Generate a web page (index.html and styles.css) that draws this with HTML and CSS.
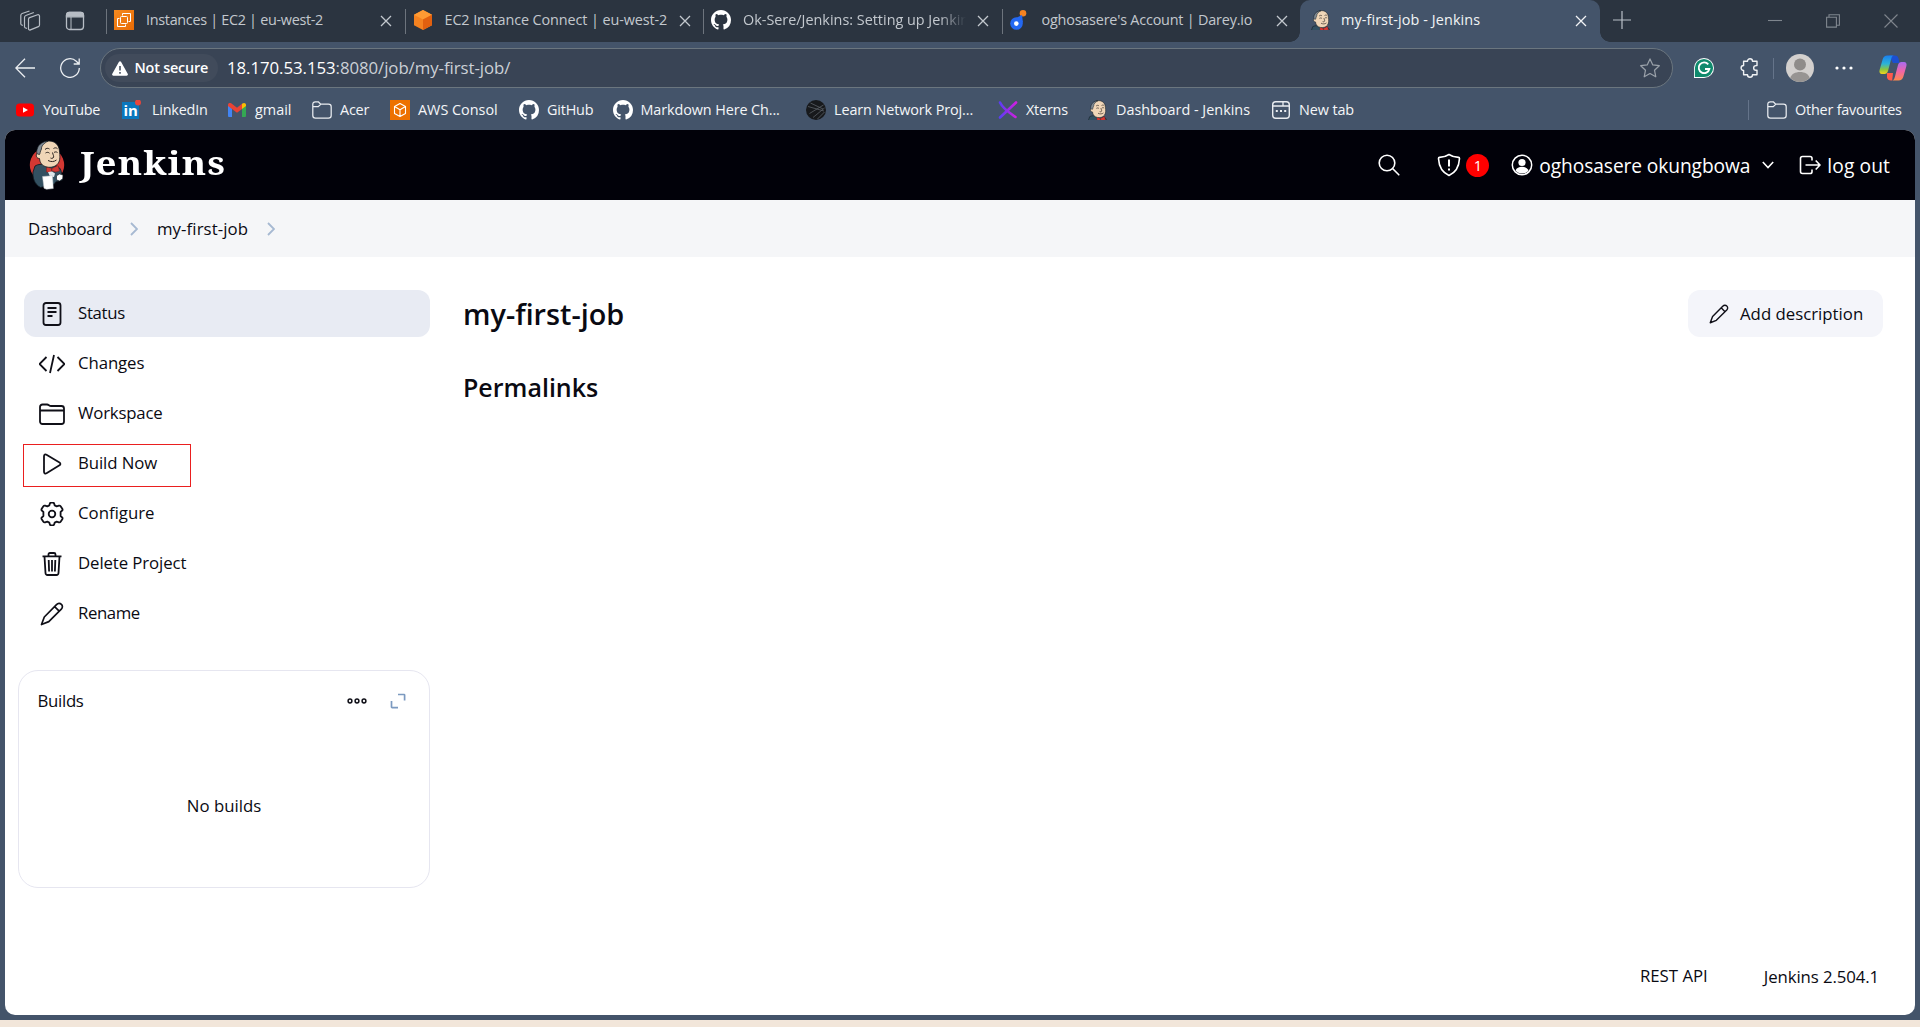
FILE: index.html
```html
<!DOCTYPE html>
<html lang="en">
<head>
<meta charset="utf-8">
<title>my-first-job - Jenkins</title>
<link rel="stylesheet" href="styles.css">
</head>
<body>
<svg class="defs" width="0" height="0" aria-hidden="true">
  <defs>
    <linearGradient id="ec2" x1="0" y1="0" x2="1" y2="1"><stop offset="0" stop-color="#f58a1f"/><stop offset="1" stop-color="#e86a05"/></linearGradient>
    <linearGradient id="xt" x1="0" y1="0" x2="1" y2="0"><stop offset="0" stop-color="#5b3df5"/><stop offset="1" stop-color="#d11ee0"/></linearGradient>
    <linearGradient id="cpA" x1="0" y1="0" x2="0" y2="1"><stop offset="0" stop-color="#1a7ff0"/><stop offset=".45" stop-color="#2cb3d8"/><stop offset=".75" stop-color="#8cc63f"/><stop offset="1" stop-color="#f4d51c"/></linearGradient>
    <linearGradient id="cpB" x1="0" y1="0" x2="0" y2="1"><stop offset="0" stop-color="#a86bf0"/><stop offset=".5" stop-color="#f065a8"/><stop offset="1" stop-color="#ff8a4c"/></linearGradient>
    <symbol id="github" viewBox="0 0 16 16"><path fill="#fff" d="M8 0C3.58 0 0 3.58 0 8c0 3.54 2.29 6.53 5.47 7.59.4.07.55-.17.55-.38 0-.19-.01-.82-.01-1.49-2.01.37-2.53-.49-2.69-.94-.09-.23-.48-.94-.82-1.13-.28-.15-.68-.52-.01-.53.63-.01 1.08.58 1.23.82.72 1.21 1.87.87 2.33.66.07-.52.28-.87.51-1.07-1.78-.2-3.64-.89-3.64-3.95 0-.87.31-1.59.82-2.15-.08-.2-.36-1.02.08-2.12 0 0 .67-.21 2.2.82.64-.18 1.32-.27 2-.27.68 0 1.36.09 2 .27 1.53-1.04 2.2-.82 2.2-.82.44 1.1.16 1.92.08 2.12.51.56.82 1.27.82 2.15 0 3.07-1.87 3.75-3.65 3.95.29.25.54.73.54 1.48 0 1.07-.01 1.93-.01 2.2 0 .21.15.46.55.38A8.013 8.013 0 0 0 16 8c0-4.42-3.58-8-8-8z"/></symbol>
    <symbol id="butler" viewBox="0 0 38 50">
      <path fill="#335061" stroke="#10181e" stroke-width=".8" d="M7 26c3-2 7-2 10-1l10 1c4 0 6 3 6.500 7l1 7-7 2-1 2-14 3.500C6 44 4.500 37 5 32z"/>
      <path fill="#d33833" stroke="#7c1512" stroke-width=".4" d="M18.500 26.500l5 2 0 4-5-.5zM24 28.500l6-3 1.500 5.500-4 1-3.500-1z"/>
      <path fill="#dfe6ea" d="M20 32l4-.5 3 2-1 3.500-4-.5z"/>
      <path fill="#f0d6b7" stroke="#10181e" stroke-width=".8" d="M11 10C12 4 16 1 21 1c6 0 10 4 10.500 10 .4 5 1 9-1.500 12.500-2 3-7 4.500-11 3.500-5-1-7-4-7.500-8.500-3 0-4-3-2.500-5 .6-1 1.400-1 2-.5z"/>
      <path fill="#818b95" stroke="#10181e" stroke-width=".7" d="M20 1c-5 .5-9 3-10.500 7C8 12 9 14 9.500 14l2 .5c.5 0 .5-3 2-5.500-.5-3 3-6 6.500-8z"/>
      <path fill="none" stroke="#2a2320" stroke-width="1" d="M17 9.500c1.500-1.500 3-1.500 4.500-.5M25.500 8.500c1.500-1 3-.8 4 .2M17.500 13c1.500-1 3-.8 4 .2M26 12.500c1-.8 2.500-.8 3.500 0M24.500 12.500c.5 2.500 2 4 .5 5.500-1 .6-2 .4-2.500 0M20 20.500c3 1.500 6 1.500 8.500-.5"/>
      <path fill="#fff" stroke="#bcc3c8" stroke-width=".5" d="M14.500 36.500l10-.8.800 12.800-6.800.8-2.500-1z"/>
      <path fill="#fff" stroke="#10181e" stroke-width=".6" d="M28.500 35.800l3-1.800 3.500 1-.3 3.800-3.200 2.200-3-1.200z"/>
    </symbol>
    <symbol id="folder" viewBox="0 0 20 20"><path fill="none" stroke="#e9ecf0" stroke-width="1.250" stroke-linejoin="round" d="M.8 6.500V4.300C.8 2.800 1.800 1.800 3.300 1.800h3l2.400 2.400h7.800c1.500 0 2.700 1 2.700 2.600v8.700c0 1.500-1.200 2.700-2.700 2.700H3.500C2 18.200.8 17 .8 15.500zM.8 6.600h5.500l2.400-2.400"/></symbol>
    <symbol id="x" viewBox="0 0 12 12"><path fill="none" stroke="currentColor" stroke-width="1.300" d="M1 1l10 10M11 1L1 11"/></symbol>
    <symbol id="pencil" viewBox="0 0 24 24"><path fill="none" stroke="#101018" stroke-width="1.700" stroke-linejoin="round" d="M1.500 22.500L4.300 15 16.500 2.600C18 1.100 20 1 21.400 2.400c1.400 1.300 1.300 3.300-.1 4.800L8.800 19.600zM14.600 4.600l4.600 4.600"/></symbol>
  </defs>
</svg>
<div class="browser">
  <div class="tabstrip">
    <div class="strip-tools">
      <svg width="22" height="22" viewBox="0 0 22 22" fill="none" stroke="#b7bdc5" stroke-width="1.200" stroke-linejoin="round"><path d="M9.500 9.200c0-.8.4-1.300 1.100-1.600l8-2.800c1-.3 1.900.2 1.900 1.200v9c0 .8-.4 1.300-1.100 1.600l-8 3.300c-1 .4-1.900-.2-1.900-1.200zM5.500 17.500V7.500c0-1 .4-1.700 1.300-2l8-3M1.800 14.500V5.500c0-1 .4-1.700 1.300-2L10.500 1"/><path d="M5.500 17.500l2.500 1M1.800 14.500l2 1"/></svg>
      <svg width="20" height="20" viewBox="0 0 20 20" fill="none" stroke="#b7bdc5" stroke-width="1.300"><rect x="1.500" y="1.500" width="17" height="17" rx="3"/><path fill="#b7bdc5" d="M1.500 5.800V4.200c0-1.500 1.200-2.700 2.700-2.700h11.600c1.500 0 2.700 1.200 2.700 2.700v1.600z"/><path d="M6 6v12.500" stroke-width="1"/></svg>
    </div>
    <div class="tab">
      <svg class="fav" viewBox="0 0 20 20"><path fill="url(#ec2)" d="M0 0h20v20H0z"/><path fill="none" stroke="#fff" stroke-width="1" d="M8.500 5.500V3.500h8v8h-2M5.500 8.500H3.500v8h8v-2"/><rect x="6.500" y="6.500" width="7" height="7" rx="1" fill="none" stroke="#fff"/></svg>
      <span class="tab-title k3">Instances | EC2 | eu-west-2</span><svg class="close"><use href="#x"/></svg>
    </div>
    <div class="tab">
      <svg class="fav" viewBox="0 0 20 20"><path fill="#f58220" d="M10 0l9 4.800v10.400L10 20l-9-4.800V4.800z"/><path fill="#ff9a33" d="M10 0l9 4.800-9 4.700-9-4.700z"/><path fill="#e2600f" d="M19 4.800v10.400L10 20V9.500z"/></svg>
      <span class="tab-title k1">EC2 Instance Connect | eu-west-2</span><svg class="close"><use href="#x"/></svg>
    </div>
    <div class="tab">
      <svg class="fav"><use href="#github"/></svg>
      <span class="tab-title fade">Ok-Sere/Jenkins: Setting up Jenkins</span><svg class="close"><use href="#x"/></svg>
    </div>
    <div class="tab">
      <svg class="fav" viewBox="0 0 20 20"><circle cx="13" cy="3.300" r="3.300" fill="#f58220"/><circle cx="6.500" cy="13.500" r="6.300" fill="#2468f2"/><path fill="#2468f2" d="M7 7.500l5-2.500 1 8z"/><circle cx="6.300" cy="13.600" r="2.300" fill="#fff"/></svg>
      <span class="tab-title k2">oghosasere's Account | Darey.io</span><svg class="close"><use href="#x"/></svg>
    </div>
    <div class="tab active">
      <svg class="fav" viewBox="5 0 30 31"><use href="#butler" width="38" height="50"/></svg>
      <span class="tab-title w1">my-first-job - Jenkins</span><svg class="close"><use href="#x"/></svg>
    </div>
    <svg class="plus" viewBox="0 0 18 18"><path stroke="#b9c0c8" stroke-width="1.200" d="M9 0v18M0 9h18"/></svg>
    <div class="window-controls">
      <svg viewBox="0 0 14 14"><path d="M0 6.500h14"/></svg>
      <svg viewBox="0 0 14 14"><path d="M.6 3.300h9.800v9.800H.6zM3 3V.8h10.400v10.400h-2.700"/></svg>
      <svg viewBox="0 0 14 14"><path d="M.5.5l13 13M13.500.5l-13 13"/></svg>
    </div>
  </div>

  <div class="toolbar">
    <svg class="i20" viewBox="0 0 20 20"><path fill="none" stroke="#eceff2" stroke-width="1.300" d="M20 10H.8M10 .8L.8 10l9.200 9.200"/></svg>
    <svg class="i20 reload" viewBox="0 0 20 20"><path fill="none" stroke="#eceff2" stroke-width="1.300" d="M19.300 10a9.300 9.300 0 1 1-3-6.800L19 6M19.200.5V6h-5.500"/></svg>
    <div class="address">
      <div class="security">
        <svg width="16" height="15" viewBox="0 0 16 15"><path fill="#fff" d="M7 .8c.5-.9 1.500-.9 2 0l6.700 12c.5.900 0 1.900-1.100 1.900H1.400C.3 14.700-.2 13.700.3 12.800z"/><path stroke="#3b4656" stroke-width="1.500" d="M8 5v4.500M8 11v1.700"/></svg>
        <span class="k2">Not secure</span>
      </div>
      <span class="url">18.170.53.153<span class="url-rest">:8080/job/my-first-job/</span></span>
      <svg class="i20 star" viewBox="0 0 20 20"><path fill="none" stroke="#9ba2aa" stroke-width="1.200" stroke-linejoin="round" d="M10 .9l2.800 6 6.500.8-4.800 4.500 1.300 6.600-5.800-3.300-5.800 3.300 1.300-6.600L.7 7.700l6.500-.8z"/></svg>
    </div>
    <svg class="i20 ext" viewBox="0 0 20 20"><path fill="#fff" d="M0 20V10a10 10 0 1 1 10 10z"/><path fill="#0f8a6d" d="M.9 19.100V10a9.100 9.100 0 1 1 9.100 9.100z"/><path fill="none" stroke="#fff" stroke-width="1.800" d="M14.300 6.300A5.400 5.400 0 1 0 15.400 11H11"/></svg>
    <svg class="i20 puzzle" viewBox="0 0 20 20"><path fill="none" stroke="#f0f2f4" stroke-width="1.400" stroke-linejoin="round" d="M7.500 3.200a2.500 2.500 0 0 1 5 0H17v4.400h-1a2.300 2.300 0 0 0 0 4.700h1v4.400h-4.500a2.500 2.500 0 0 1-5 0H3.600v-4.200a2.500 2.500 0 0 1 0-5V3.200z"/></svg>
    <span class="rule"></span>
    <svg class="avatar" viewBox="0 0 28 28"><circle cx="14" cy="14" r="14" fill="#d3d0ce"/><circle cx="14" cy="10.500" r="6" fill="#8f8c8a"/><path fill="#979492" d="M4.300 24c1-4 5-6 9.700-6s8.700 2 9.700 6a14 14 0 0 1-19.400 0z"/></svg>
    <svg class="more" viewBox="0 0 18 4" fill="#fff"><circle cx="2" cy="2" r="1.600"/><circle cx="9" cy="2" r="1.600"/><circle cx="16" cy="2" r="1.600"/></svg>
    <svg class="copilot" viewBox="0 0 28 26"><path fill="#1c4fd0" d="M10 .5h6c2 0 3 1 3.500 3L20.500 8H14z"/><path fill="url(#cpA)" d="M8.500.5H15c-1.500 0-2.300 1.500-3 4L9 16c-.6 2-1.700 3-3.500 3H3C.8 19 0 17.300.6 15l3-10.500C4.300 1.800 6 .5 8.500.5z"/><path fill="#ff5a4c" d="M8 18h6l-.8 7.500H12c-2.500 0-3.500-1-4-3z"/><path fill="url(#cpB)" d="M19.500 25.500H13c1.500 0 2.300-1.500 3-4L19 10c.6-2 1.700-3 3.500-3H25c2.200 0 3 1.700 2.400 4l-3 10.500c-.7 2.700-2.400 4-4.900 4z"/></svg>
  </div>

  <div class="bookmarks">
    <div class="bm"><svg class="i20" viewBox="0 0 20 20"><rect x="1" y="3.500" width="18" height="13" rx="3.500" fill="#f00"/><path fill="#fff" d="M8 7.300l5 2.700-5 2.700z"/></svg><span class="k3">YouTube</span></div>
    <div class="bm"><svg class="linkedin" viewBox="0 0 22 20"><path fill="#0a77bd" d="M0 2h17v17H0z"/><text x="1.500" y="16" class="in-mark">in</text><circle cx="16" cy="2.500" r="3" fill="#e8453c"/></svg><span class="k2">LinkedIn</span></div>
    <div class="bm"><svg class="i20" viewBox="0 0 20 20"><path fill="#4285f4" d="M1 5l4 3.500V17H2.300C1.500 17 1 16.500 1 15.700z"/><path fill="#34a853" d="M19 5l-4 3.500V17h2.700c.8 0 1.300-.5 1.300-1.300z"/><path fill="#ea4335" d="M1 5c0-2 2-2.500 3.500-1.500L10 7.700l5-4V9l-5 3.800L5 9 1 6z"/><path fill="#fbbc04" d="M15 3.700c2-1.500 4-.8 4 1.300v1l-4 3z"/></svg><span>gmail</span></div>
    <div class="bm"><svg class="i20"><use href="#folder"/></svg><span class="k2">Acer</span></div>
    <div class="bm"><svg class="i20" viewBox="0 0 20 20"><path fill="#ed7100" d="M0 0h20v20H0z"/><path fill="none" stroke="#fff" stroke-width="1.100" stroke-linejoin="round" d="M10 3.500l5.500 3v7L10 16.500l-5.500-3v-7zM4.500 6.500L10 9.700l5.500-3.200M10 9.700v6.800"/></svg><span>AWS Consol</span></div>
    <div class="bm"><svg class="i20"><use href="#github"/></svg><span class="k2">GitHub</span></div>
    <div class="bm gh2"><svg class="i20"><use href="#github"/></svg><span class="k1">Markdown Here Ch...</span></div>
    <div class="bm"><svg class="i20" viewBox="0 0 20 20"><circle cx="10" cy="10" r="10" fill="#17191c"/><path fill="none" stroke="#5a5f66" stroke-width=".8" d="M4.500 3l12.500 6M2 6.500l16 4.500M17.500 5L3.500 13.500M18.500 8L7 17.500M18.500 12l-7 7"/></svg><span class="k1">Learn Network Proj...</span></div>
    <div class="bm"><svg class="i20" viewBox="0 0 20 20"><path fill="none" stroke="url(#xt)" stroke-width="2.600" stroke-linecap="round" d="M2 2.500C5 9 12 13 17.500 17M18 2.500L2 17.500"/></svg><span class="k2">Xterns</span></div>
    <div class="bm"><svg class="i20" viewBox="5 0 30 31"><use href="#butler" width="38" height="50"/></svg><span>Dashboard - Jenkins</span></div>
    <div class="bm"><svg class="i20" viewBox="0 0 20 20"><rect x="1.700" y="1.700" width="16.600" height="16.600" rx="3" fill="none" stroke="#e9ecf0" stroke-width="1.400"/><path fill="none" stroke="#e9ecf0" stroke-width="1.300" d="M1.700 6H12V1.700M12 6h6.300"/><path fill="#e9ecf0" d="M4.800 10h2v2h-2zM9 10h2v2H9zM13.200 10h2v2h-2z"/></svg><span class="k1">New tab</span></div>
    <div class="bm other"><svg class="i20"><use href="#folder"/></svg><span class="k2">Other favourites</span></div>
  </div>

  <div class="page">
    <header class="header">
      <svg class="logo" viewBox="0 0 38 50"><circle cx="19" cy="25" r="17.200" fill="#d33833"/><use href="#butler" width="38" height="50"/></svg>
      <span class="wordmark">Jenkins</span>
      <div class="header-right">
        <svg class="search" viewBox="0 0 22 22" fill="none" stroke="#fff" stroke-width="1.600"><circle cx="9" cy="9" r="7.800"/><path stroke-linecap="round" d="M14.800 14.800l6 6"/></svg>
        <svg class="shield" viewBox="0 0 24 24" fill="none" stroke="#fff" stroke-width="1.600" stroke-linejoin="round"><path d="M12 1.500c3 2 6.500 2.700 9.500 2.900.8.100 1 .6 1 1.200C22 14.500 18.500 19.500 12 22.500 5.500 19.500 2 14.500 1.500 5.600c0-.6.2-1.100 1-1.200 3-.2 6.500-.9 9.500-2.900z"/><path stroke-width="2" d="M12 6.500v7M12 15.500v2"/></svg>
        <span class="badge">1</span>
        <svg class="user" viewBox="0 0 22 22"><circle cx="11" cy="11" r="9.700" fill="none" stroke="#fff" stroke-width="1.500"/><circle cx="11" cy="8.500" r="3.600" fill="#fff"/><path fill="#fff" d="M4.500 16.500C5.500 14 8 12.800 11 12.800s5.500 1.200 6.500 3.700C16 18.600 13.500 19.500 11 19.500s-5-.9-6.500-3z"/></svg>
        <span class="user-name k1">oghosasere okungbowa</span>
        <svg class="chev" viewBox="0 0 12 8"><path fill="none" stroke="#fff" stroke-width="1.600" d="M.8 1L6 6.500 11.200 1"/></svg>
        <svg class="logout" viewBox="0 0 22 20" fill="none" stroke="#fff" stroke-width="1.600" stroke-linejoin="round"><path d="M13 5.500V3.300C13 2 12 1.500 11 1.500H3.500C2.200 1.500 1.500 2.300 1.500 3.500v13c0 1.200.7 2 2 2H11c1 0 2-.6 2-1.800v-2.200M6.500 10H21M16.700 5.500L21 10l-4.300 4.500"/></svg>
        <span class="log-out w1">log out</span>
      </div>
    </header>
    <nav class="crumbs">
      <span class="k3">Dashboard</span>
      <svg viewBox="0 0 8 14"><path d="M1 1l6 6-6 6"/></svg>
      <span class="w1">my-first-job</span>
      <svg viewBox="0 0 8 14"><path d="M1 1l6 6-6 6"/></svg>
    </nav>
    <div class="body">
      <aside>
        <div class="tasks">
          <a class="task current"><svg viewBox="0 0 24 24"><rect x="3.500" y="1" width="17" height="22" rx="2.500"/><path d="M7.500 6h9M7.500 10h9M7.500 14h5"/></svg><span class="k3">Status</span></a>
          <a class="task"><svg viewBox="0 0 26 24"><path d="M7.500 5l-7 7 7 7M18.500 5l7 7-7 7M15 3l-4 18"/></svg><span class="k1">Changes</span></a>
          <a class="task"><svg viewBox="0 0 26 24"><path d="M1 8.500V5c0-1.500 1-2.500 2.500-2.500h4.600c1.700 0 2 1.500 4 1.500h10.400C24 4 25 5 25 6.500v13c0 1.500-1 2.500-2.500 2.500h-19C2 22 1 21 1 19.500zM1 8.500h24"/></svg><span class="k2">Workspace</span></a>
          <a class="task"><svg viewBox="0 0 24 24"><path d="M4 4.200c0-1.500 1.300-2.200 2.500-1.500l13 7.900c1.200.700 1.200 2 0 2.700l-13 8c-1.200.700-2.500 0-2.500-1.500z"/></svg><span class="k1">Build Now</span><i class="highlight"></i></a>
          <a class="task"><svg viewBox="0 0 24 24"><circle cx="12" cy="12" r="3.300"/><path d="M9.300 3.400l.5-1.700C10 1 10.500.6 11.200.6h1.600c.7 0 1.200.4 1.400 1.100l.5 1.700 2 1 2.200-.7c.6-.2 1.300 0 1.700.6l1.700 2.500c.4.700.3 1.400-.3 1.900L20.600 10v4l1.400 1.300c.6.500.7 1.200.3 1.900l-1.700 2.500c-.4.600-1.100.8-1.700.6l-2.200-.7-2 1-.5 1.700c-.2.700-.7 1.100-1.400 1.100h-1.600c-.7 0-1.200-.4-1.400-1.100l-.5-1.700-2-1-2.200.7c-.6.200-1.300 0-1.700-.6l-1.700-2.500c-.4-.7-.3-1.400.3-1.900L3.400 14v-4L2 8.700c-.6-.5-.7-1.200-.3-1.900l1.700-2.500c.4-.6 1.100-.8 1.700-.6l2.200.7z"/></svg><span>Configure</span></a>
          <a class="task"><svg viewBox="0 0 24 24"><path d="M2.500 4.300h19M4.500 4.500l1 16.500c.1 1.200.9 2 2 2h9c1.100 0 1.900-.8 2-2l1-16.500M8.500 4V2.500C8.500 1.500 9 1 10 1h4c1 0 1.500.5 1.500 1.500V4M8.700 8l.4 11.500M12 8v11.500M15.300 8l-.4 11.500"/></svg><span class="k1">Delete Project</span></a>
          <a class="task"><svg viewBox="0 0 24 24"><use href="#pencil" width="24" height="24"/></svg><span class="k4">Rename</span></a>
        </div>
        <section class="builds">
          <div class="builds-head">
            <span class="k3">Builds</span>
            <svg class="dots" viewBox="0 0 20 6" fill="none" stroke="#101018" stroke-width="1.500"><circle cx="3" cy="3" r="1.900"/><circle cx="10" cy="3" r="1.900"/><circle cx="17" cy="3" r="1.900"/></svg>
            <svg class="expand" viewBox="0 0 16 16" fill="none" stroke="#7c9ac0" stroke-width="1.700"><path d="M8 1.500h6c.4 0 .6.200.6.600v5.500M1.500 8v6c0 .4.200.6.600.6H8"/></svg>
          </div>
          <p>No builds</p>
        </section>
      </aside>
      <main>
        <div class="title-row">
          <h1>my-first-job</h1>
          <button type="button"><svg width="20" height="20"><use href="#pencil"/></svg><span>Add description</span></button>
        </div>
        <h2>Permalinks</h2>
      </main>
    </div>
    <footer><span class="rest">REST API</span><span class="k1">Jenkins 2.504.1</span></footer>
  </div>
</div>
</body>
</html>
```
FILE: styles.css
```css
* { box-sizing: border-box; }
body { margin: 0; background: #f2e6da; font-family: "Open Sans", "Noto Sans", sans-serif; overflow: hidden; }
svg { display: block; flex: none; }
span { white-space: nowrap; }
.defs { position: absolute; }
.w1 { letter-spacing: .1px; }
.k1 { letter-spacing: -.1px; }
.k2 { letter-spacing: -.2px; }
.k3 { letter-spacing: -.3px; }
.k4 { letter-spacing: -.44px; }
.i20 { width: 20px; height: 20px; }

.browser { height: 1020px; background: #44546a; display: flex; flex-direction: column; }

/* tabs */
.tabstrip { height: 42px; background: #2b3440; display: flex; align-items: center; flex: none; }
.strip-tools { width: 106px; display: flex; padding-left: 19px; gap: 24px; align-items: center; }
.tab { width: 298.5px; height: 25px; display: flex; align-items: center; padding-left: 7px; border-left: 1px solid #6d747d; color: #c3c8ce; font-size: 14.4px; line-height: 20px; }
.fav { width: 20px; height: 20px; margin-right: 12px; margin-top: -2px; }
.tab-title { width: 223px; overflow: hidden; margin-top: -2px; }
.fade { -webkit-mask-image: linear-gradient(90deg, #000 88%, transparent 100%); mask-image: linear-gradient(90deg, #000 88%, transparent 100%); }
.close { width: 12px; height: 12px; margin-left: 11px; }
.active { position: relative; width: 299.5px; height: 42px; padding-left: 11px; border: 0; border-radius: 10px 10px 0 0; background: #44546a; color: #f2f4f6; }
.active .fav { margin-right: 10px; }
.active::before, .active::after { content: ""; position: absolute; bottom: 0; width: 10px; height: 10px; }
.active::before { left: -10px; background: radial-gradient(circle at 0 0, transparent 9.5px, #44546a 10px); }
.active::after { right: -10px; background: radial-gradient(circle at 100% 0, transparent 9.5px, #44546a 10px); }
.plus { width: 18px; height: 18px; margin: -2px 0 0 13px; }
.window-controls { margin-left: auto; margin-right: 22px; display: flex; gap: 44px; }
.window-controls svg { width: 14px; height: 14px; fill: none; stroke: #7f868e; stroke-width: 1.1; }

/* toolbar */
.toolbar { height: 52px; padding-left: 15px; display: flex; align-items: center; flex: none; }
.reload { margin: 0 20px 0 25px; }
.address { width: 1573px; height: 40px; border: 1px solid #6b767f; border-radius: 20px; background: #394455; display: flex; align-items: center; padding: 0 12px 0 4px; }
.security { width: 113px; height: 28px; border-radius: 14px; background: #414b5b; display: flex; align-items: center; gap: 6.5px; padding-left: 7px; margin-right: 9px; color: #fff; font-size: 14.4px; font-weight: 600; }
.security span, .url { margin-top: -2px; }
.url { font-size: 16.8px; letter-spacing: -.05px; color: #fff; }
.url-rest { color: #ccd1d7; }
.star { margin-left: auto; }
.ext { margin-left: 21px; }
.puzzle { margin-left: 26px; }
.rule { width: 1px; height: 21px; background: #65748a; margin-left: 13px; }
.avatar { width: 28px; height: 28px; margin-left: 12px; }
.more { width: 18px; height: 4px; margin-left: 21px; }
.copilot { width: 28px; height: 26px; margin-left: 26px; }

/* favourites */
.bookmarks { height: 36px; padding-left: 15px; display: grid; grid-template-columns: 107px 105px 85px 78px 129px 94px 193px 192px 90px 183px 477px 1fr; align-items: center; flex: none; padding-bottom: 4px; }
.bm { display: flex; align-items: center; gap: 8px; font-size: 14.4px; line-height: 20px; color: #f4f6f8; }
.bm span { margin-top: -1px; }
.gh2 { gap: 7.5px; }
.linkedin { width: 22px; height: 20px; }
.in-mark { font: 700 15px "Open Sans", sans-serif; fill: #fff; }
.other { border-left: 1px solid #65748a; padding-left: 18px; }

/* page */
.page { width: 1910px; height: 885px; margin-left: 5px; background: #fff; border-radius: 10px; overflow: hidden; display: flex; flex-direction: column; color: #0a0a12; font-size: 16.8px; line-height: 24px; }
.header { height: 70px; background: #010109; color: #fff; display: flex; align-items: center; padding-left: 23px; flex: none; }
.logo { width: 38px; height: 50px; }
.wordmark { font-family: "Noto Serif", "DejaVu Serif", serif; font-weight: 700; font-size: 33px; line-height: 40px; letter-spacing: 1px; margin: -4px 0 0 14px; transform: scaleX(1.11); transform-origin: 0 50%; }
.header-right { margin-left: auto; padding-right: 25px; display: flex; align-items: center; font-size: 19.2px; }
.search { width: 22px; height: 22px; margin-right: 37px; }
.shield { width: 24px; height: 24px; margin-right: 5px; }
.badge { width: 23px; height: 23px; border-radius: 50%; background: #f00; font-size: 14.5px; line-height: 23px; text-align: center; margin-right: 22px; }
.user { width: 22px; height: 22px; margin-right: 6px; }
.user-name { width: 211px; }
.user-name, .log-out { margin-top: 1px; }
.chev { width: 12px; height: 8px; margin: 0 25px 0 12px; }
.logout { width: 22px; height: 20px; margin-right: 6px; }
.crumbs { height: 57px; background: #f5f6f8; display: flex; align-items: center; padding-left: 23px; flex: none; }
.crumbs svg { width: 8px; height: 14px; margin: 0 18.5px; fill: none; stroke: #a6b9d2; stroke-width: 1.8; }
.body { display: flex; padding-top: 33px; flex: 1; }
aside { width: 425px; flex: none; }
.tasks { padding-left: 19px; display: grid; gap: 3px; }
.task { position: relative; height: 47px; border-radius: 12px; display: flex; align-items: center; padding-left: 14.500px; gap: 13.500px; }
.current { background: #e8ebf3; }
.task svg { width: 26px; height: 24px; fill: none; stroke: #101018; stroke-width: 1.8; stroke-linejoin: round; }
.task span { margin-top: -1px; }
.highlight { position: absolute; left: -1px; top: 4px; width: 168px; height: 43px; border: 1px solid #ea1f1f; }
.builds { margin: 33px 0 0 13px; width: 412px; height: 218px; border: 1px solid #e6e6f0; border-radius: 20px; text-align: center; }
.builds-head { display: flex; align-items: center; padding: 18px 23px 0 18.5px; }
.dots { width: 20px; height: 6px; margin: 0 23px 0 auto; }
.expand { width: 16px; height: 16px; }
.builds p { margin: 81px 0 0; }
main { flex: 1; padding-left: 33px; }
.title-row { display: flex; height: 47px; align-items: center; padding-right: 32px; }
h1 { margin: 0; font-size: 28.8px; line-height: 36px; font-weight: 600; }
h2 { margin: 32px 0 0; font-size: 25px; line-height: 36px; font-weight: 600; }
button { margin-left: auto; width: 195px; height: 47px; border: 0; border-radius: 12px; background: #f4f5fa; display: flex; align-items: center; gap: 11px; padding: 0 0 0 21px; font: inherit; color: inherit; }
footer { display: flex; justify-content: flex-end; padding: 0 36px 26px; }
.rest { margin: -1px 56px 0 0; }
```
